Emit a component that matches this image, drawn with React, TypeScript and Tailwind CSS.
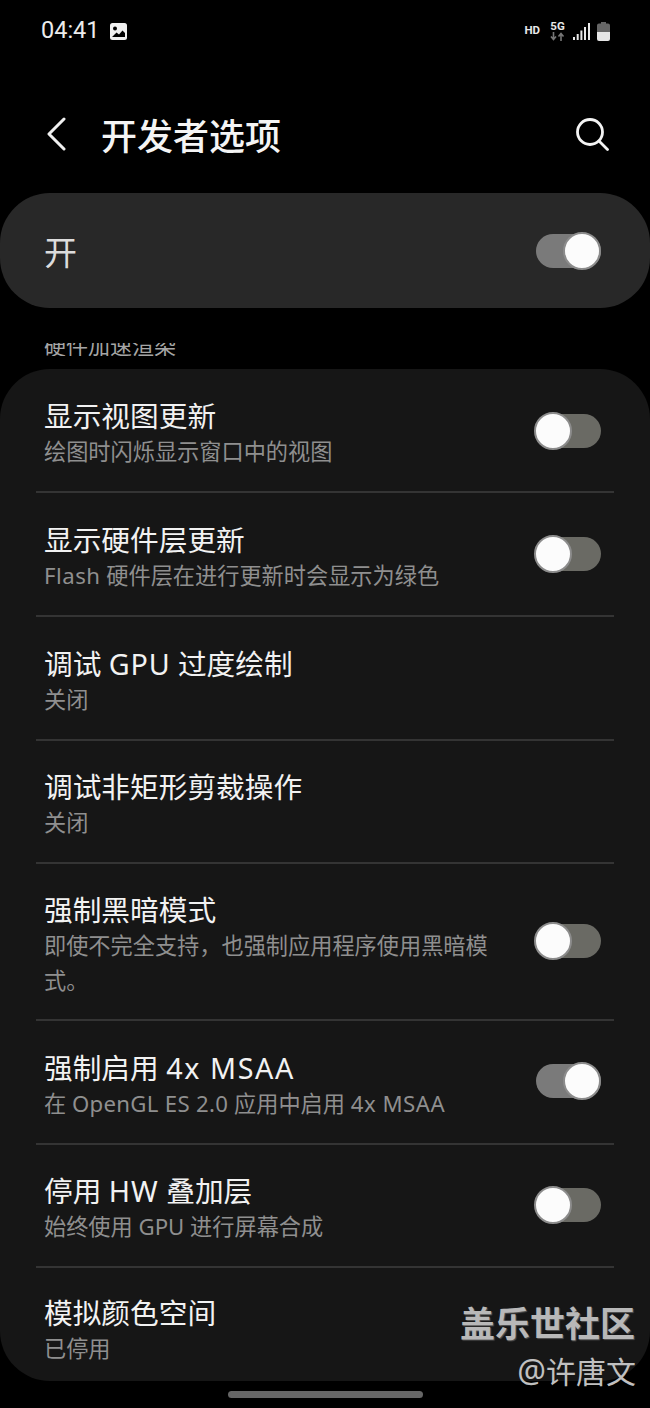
import React from "react";

const font = { fontFamily: '"Noto Sans", "Noto Sans CJK SC", sans-serif' };
const statusFont = { fontFamily: '"Roboto", sans-serif' };

function Toggle({ on }: { on: boolean }) {
  return (
    <div className="relative w-[67px] h-[38px] shrink-0 flex items-center justify-end">
      <div className={`h-[34px] w-[65px] rounded-full ${on ? "bg-[#7a7a7a]" : "bg-[#6a6a64]"}`} />
      <div
        className={`absolute top-0 h-[38px] w-[38px] rounded-full bg-[#fcfcfc] border-2 border-[#8c8c8c] ${on ? "right-0" : "left-0"}`}
      />
    </div>
  );
}

type Row = {
  key: string;
  title: React.ReactNode;
  sub: React.ReactNode;
  toggle?: "on" | "off";
  h: string;
  last?: boolean;
  nudge?: string;
};

const rows: Row[] = [
  { key: "a", title: "显示视图更新", sub: "绘图时闪烁显示窗口中的视图", toggle: "off", h: "h-[124px]", nudge: "pt-[2px]" },
  {
    key: "b",
    title: "显示硬件层更新",
    sub: (
      <>
        <span className="tracking-[0.5px]">Flash</span> 硬件层在进行更新时会显示为绿色
      </>
    ),
    toggle: "off",
    h: "h-[124px]",
  },
  {
    key: "c",
    title: (
      <>
        调试 <span className="tracking-[0.8px]">GPU</span> 过度绘制
      </>
    ),
    sub: "关闭",
    h: "h-[124px]",
  },
  { key: "d", title: "调试非矩形剪裁操作", sub: "关闭", h: "h-[123px]" },
  { key: "e", title: "强制黑暗模式", sub: "即使不完全支持，也强制应用程序使用黑暗模式。", toggle: "off", h: "h-[157px]", nudge: "pb-[2px]" },
  {
    key: "f",
    title: (
      <>
        强制启用 <span className="tracking-[1.6px]">4x MSAA</span>
      </>
    ),
    sub: (
      <>
        在 <span className="tracking-[0.3px]">OpenGL ES 2.0</span> 应用中启用 <span className="tracking-[0.5px]">4x MSAA</span>
      </>
    ),
    toggle: "on",
    h: "h-[124px]",
    nudge: "pb-[2px]",
  },
  {
    key: "g",
    title: (
      <>
        停用 <span className="tracking-[1px]">HW</span> 叠加层
      </>
    ),
    sub: "始终使用 GPU 进行屏幕合成",
    toggle: "off",
    h: "h-[123px]",
    nudge: "pb-[2px]",
  },
  { key: "h", title: "模拟颜色空间", sub: "已停用", h: "h-[113px]", last: true },
];

function ListRow({ r }: { r: Row }) {
  return (
    <div className={`mx-[36px] pl-[8px] pr-[13px] flex items-center justify-between box-border ${r.h} ${r.last ? "" : "border-b-2 border-[#343434]"}`}>
      <div className={`w-[450px] ${r.last ? "pt-[12px]" : "pt-[6px]"}`}>
        <div className="text-[28.7px] leading-[36px] text-[#f2f2f2]">{r.title}</div>
        <div className="text-[22.2px] leading-[35px] text-[#8f8f8f]">{r.sub}</div>
      </div>
      {r.toggle && (
        <div className={r.nudge}>
          <Toggle on={r.toggle === "on"} />
        </div>
      )}
    </div>
  );
}

export default function App() {
  return (
    <div className="relative w-[650px] h-[1408px] bg-black overflow-hidden" style={font}>
      {/* status bar */}
      <div className="h-[60px] pt-[2px] flex items-center justify-between pl-[41px] pr-[40px]" style={statusFont}>
        <div className="flex items-center gap-[10px]">
          <span className="text-[23.5px] text-[#ececec] leading-none">04:41</span>
          <svg width="17" height="17" viewBox="0 0 17 17">
            <rect x="0" y="0" width="17" height="17" rx="2.5" fill="#f0f0f0" />
            <circle cx="5" cy="5.5" r="2" fill="#000" />
            <path d="M2 14 L6.5 9.5 L9 11.5 L12.5 7.5 L15 10 L15 14 Z" fill="#000" />
          </svg>
        </div>
        <div className="flex items-center">
          <span className="text-[11.5px] font-bold text-[#e8e8e8] leading-none mr-[10px]">HD</span>
          <div className="flex flex-col items-center mr-[8px] w-[15px]">
            <span className="text-[11.5px] font-bold text-[#e8e8e8] leading-[11px]">5G</span>
            <svg width="15" height="9" viewBox="0 0 15 9">
              <path d="M3.5 0 V7 M1 4.5 L3.5 7.5 L6 4.5" stroke="#777" strokeWidth="1.6" fill="none" />
              <path d="M11 9 V2 M8.5 4.5 L11 1.5 L13.5 4.5" stroke="#777" strokeWidth="1.6" fill="none" />
            </svg>
          </div>
          <svg width="17" height="18" viewBox="0 0 17 18" className="mr-[7px]">
            <rect x="0" y="15" width="2" height="3" fill="#e8e8e8" />
            <rect x="3.7" y="12" width="2" height="6" fill="#e8e8e8" />
            <rect x="7.4" y="8.5" width="2" height="9.5" fill="#e8e8e8" />
            <rect x="11" y="5" width="2" height="13" fill="#e8e8e8" />
            <rect x="15" y="1" width="2" height="17" fill="#e8e8e8" />
          </svg>
          <svg width="13" height="19" viewBox="0 0 13 19">
            <path d="M4 0 H9 V1.5 H11 Q13 1.5 13 3.5 V10 H0 V3.5 Q0 1.5 2 1.5 H4 Z" fill="#666" />
            <path d="M0 10 H13 V17 Q13 19 11 19 H2 Q0 19 0 17 Z" fill="#e6e6e6" />
          </svg>
        </div>
      </div>

      {/* header */}
      <div className="mt-[16px] h-[117px] pb-[1px] flex items-center justify-between pl-[46px] pr-[41px]">
        <div className="flex items-center">
          <svg width="20" height="34" viewBox="0 0 20 34">
            <path d="M18 2 L3 17 L18 32" stroke="#f0f0f0" strokeWidth="3" fill="none" strokeLinecap="round" strokeLinejoin="round" />
          </svg>
          <span className="ml-[35px] pt-[6px] text-[36px] leading-none font-medium text-[#f4f4f4]">开发者选项</span>
        </div>
        <svg width="34" height="34" viewBox="0 0 34 34">
          <circle cx="15" cy="15" r="12.5" stroke="#f4f4f4" strokeWidth="2.8" fill="none" />
          <path d="M24.5 24.5 L32.5 32.5" stroke="#f4f4f4" strokeWidth="2.8" strokeLinecap="round" />
        </svg>
      </div>

      {/* main switch */}
      <div className="h-[115px] rounded-[50px] bg-[#282828] flex items-center justify-between pl-[44px] pr-[49px]">
        <span className="pt-[4px] text-[33px] leading-none text-[#dcdcdc]">开</span>
        <Toggle on />
      </div>

      {/* clipped section heading */}
      <div className="mt-[35px] h-[13px] overflow-hidden pl-[44px]">
        <div className="-mt-[9px] text-[22px] leading-[22px] text-[#a5a5a5]">硬件加速渲染</div>
      </div>

      {/* list */}
      <div className="mt-[13px] rounded-[50px] bg-[#161616]">
        {rows.map((r) => (
          <ListRow key={r.key} r={r} />
        ))}
      </div>

      {/* home indicator */}
      <div className="mt-[10px] mx-auto w-[195px] h-[7px] rounded-full bg-[#666666]" />

      {/* watermark */}
      <div className="absolute right-[15px] top-[1302px] text-[35px] leading-[44px] font-bold text-[#b8b8b8] [text-shadow:1px_1px_1px_#555]">
        盖乐世社区
      </div>
      <div className="absolute right-[14px] top-[1351px] text-[30px] leading-[40px] text-[#c0c0c0]">
        <span className="text-[32px]">@</span>许唐文
      </div>
    </div>
  );
}
